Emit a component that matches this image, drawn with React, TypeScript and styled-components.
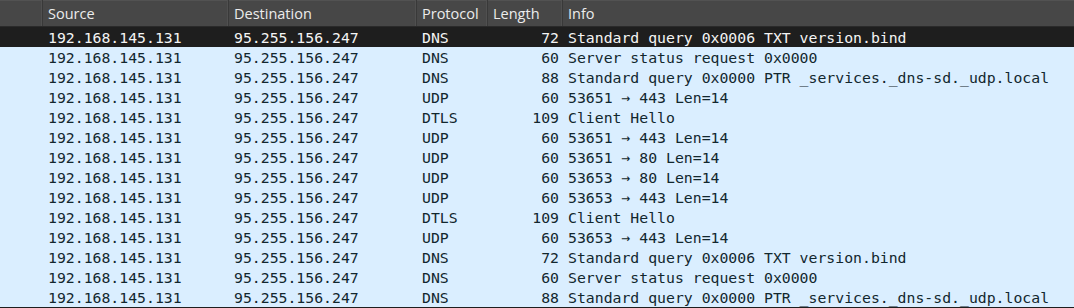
import * as React from 'react';
import styled, { createGlobalStyle } from 'styled-components';

const GlobalStyle = createGlobalStyle`
  html, body {
    margin: 0;
    padding: 0;
    background: #1e1e1e;
  }
`;

interface Packet {
  source: string;
  destination: string;
  protocol: string;
  length: number;
  info: string;
}

const packets: Packet[] = [
  { source: '192.168.145.131', destination: '95.255.156.247', protocol: 'DNS', length: 72, info: 'Standard query 0x0006 TXT version.bind' },
  { source: '192.168.145.131', destination: '95.255.156.247', protocol: 'DNS', length: 60, info: 'Server status request 0x0000' },
  { source: '192.168.145.131', destination: '95.255.156.247', protocol: 'DNS', length: 88, info: 'Standard query 0x0000 PTR _services._dns-sd._udp.local' },
  { source: '192.168.145.131', destination: '95.255.156.247', protocol: 'UDP', length: 60, info: '53651 → 443 Len=14' },
  { source: '192.168.145.131', destination: '95.255.156.247', protocol: 'DTLS', length: 109, info: 'Client Hello' },
  { source: '192.168.145.131', destination: '95.255.156.247', protocol: 'UDP', length: 60, info: '53651 → 443 Len=14' },
  { source: '192.168.145.131', destination: '95.255.156.247', protocol: 'UDP', length: 60, info: '53651 → 80 Len=14' },
  { source: '192.168.145.131', destination: '95.255.156.247', protocol: 'UDP', length: 60, info: '53653 → 80 Len=14' },
  { source: '192.168.145.131', destination: '95.255.156.247', protocol: 'UDP', length: 60, info: '53653 → 443 Len=14' },
  { source: '192.168.145.131', destination: '95.255.156.247', protocol: 'DTLS', length: 109, info: 'Client Hello' },
  { source: '192.168.145.131', destination: '95.255.156.247', protocol: 'UDP', length: 60, info: '53653 → 443 Len=14' },
  { source: '192.168.145.131', destination: '95.255.156.247', protocol: 'DNS', length: 72, info: 'Standard query 0x0006 TXT version.bind' },
  { source: '192.168.145.131', destination: '95.255.156.247', protocol: 'DNS', length: 60, info: 'Server status request 0x0000' },
  { source: '192.168.145.131', destination: '95.255.156.247', protocol: 'DNS', length: 88, info: 'Standard query 0x0000 PTR _services._dns-sd._udp.local' },
];

const columns = '43px 186px 188px 71px 75px 1fr';

const SList = styled.div`
  width: 1074px;
  display: flex;
  flex-direction: column;
  border-bottom: 1px solid #1e1e1e;
`;

const SHeader = styled.div`
  display: grid;
  grid-template-columns: ${columns};
  height: 26px;
  background: #474747;
  border-bottom: 1px solid #2a2a2a;
  box-shadow: inset 0 1px 0 #525252;
`;

const SHeaderCell = styled.div`
  display: flex;
  align-items: center;
  padding: 0 5px;
  border-right: 1px solid #393939;
  box-shadow: inset -1px 0 0 #505050;
  color: #ececec;
  font-family: 'Open Sans', 'Noto Sans', sans-serif;
  font-size: 14.5px;
  white-space: nowrap;
  overflow: hidden;
  &:last-child {
    border-right: none;
    box-shadow: none;
  }
`;

const SRow = styled.div<{ $selected?: boolean }>`
  display: grid;
  grid-template-columns: ${columns};
  height: 20px;
  background: ${(p) => (p.$selected ? '#1e1e1e' : '#daeeff')};
  color: ${(p) => (p.$selected ? '#f4f4f4' : '#12272e')};
  font-family: 'DejaVu Sans Mono', 'Liberation Mono', monospace;
  font-size: 14.8px;
`;

const SCell = styled.div<{ $right?: boolean }>`
  display: flex;
  align-items: center;
  justify-content: ${(p) => (p.$right ? 'flex-end' : 'flex-start')};
  padding: ${(p) => (p.$right ? '0 4px 0 0' : '0 0 0 5px')};
  white-space: pre;
  overflow: hidden;
`;

export default function App() {
  return (
    <>
      <GlobalStyle />
      <SList>
        <SHeader>
          <SHeaderCell />
          <SHeaderCell>Source</SHeaderCell>
          <SHeaderCell>Destination</SHeaderCell>
          <SHeaderCell>Protocol</SHeaderCell>
          <SHeaderCell>Length</SHeaderCell>
          <SHeaderCell>Info</SHeaderCell>
        </SHeader>
        {packets.map((p, i) => (
          <SRow key={i} $selected={i === 0}>
            <SCell />
            <SCell>{p.source}</SCell>
            <SCell>{p.destination}</SCell>
            <SCell>{p.protocol}</SCell>
            <SCell $right>{p.length}</SCell>
            <SCell>{p.info}</SCell>
          </SRow>
        ))}
      </SList>
    </>
  );
}
